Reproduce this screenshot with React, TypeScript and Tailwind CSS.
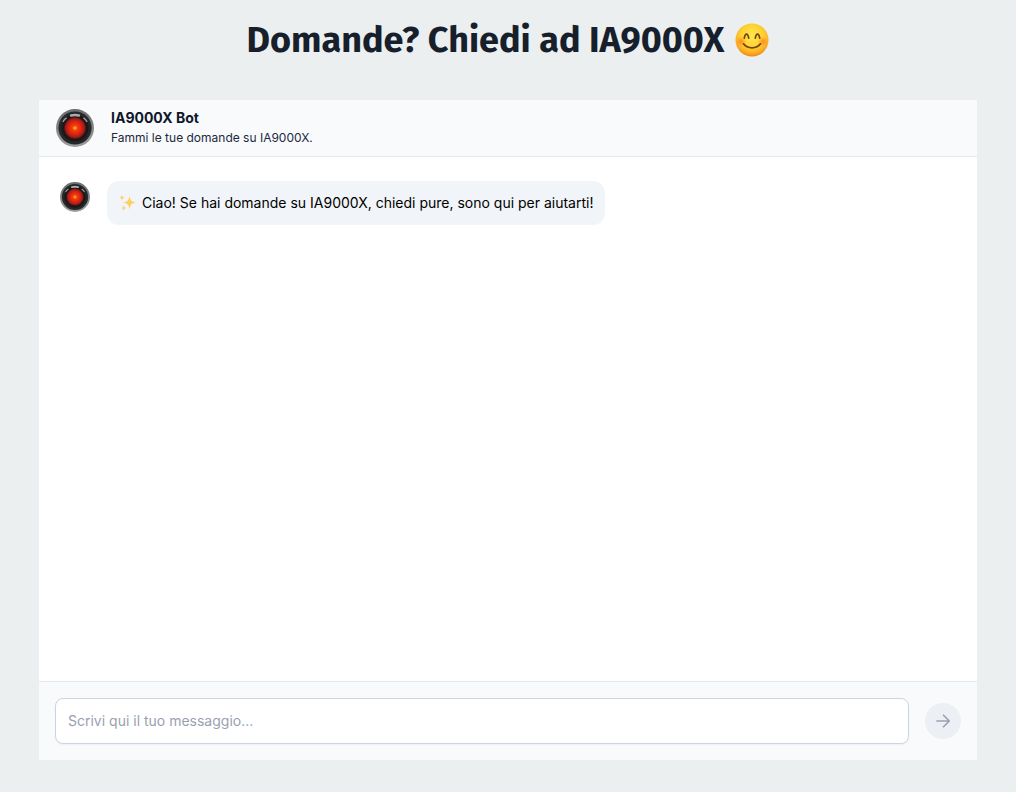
import React, { useState } from 'react';

interface Message {
    id: number;
    text: string;
    sparkles?: boolean;
}

const initialMessages: Message[] = [
    {
        id: 1,
        text: 'Ciao! Se hai domande su IA9000X, chiedi pure, sono qui per aiutarti!',
        sparkles: true
    }
];

const BotAvatar: React.FC<{ id: string; className: string }> = ({ id, className }) => (
    <svg viewBox="0 0 38 38" className={className} aria-hidden="true">
        <defs>
            <radialGradient id={`${id}-eye`}>
                <stop offset="0" stopColor="#ffe02a" />
                <stop offset="0.1" stopColor="#ff8a10" />
                <stop offset="0.24" stopColor="#f4400c" />
                <stop offset="0.6" stopColor="#dc2114" />
                <stop offset="0.85" stopColor="#a31c16" />
                <stop offset="1" stopColor="#3a1716" />
            </radialGradient>
            <linearGradient id={`${id}-ring`} x1="0" y1="0" x2="0" y2="1">
                <stop offset="0" stopColor="#6b6c6d" />
                <stop offset="1" stopColor="#9d9e9f" />
            </linearGradient>
        </defs>
        <circle cx="19" cy="19" r="19" fill={`url(#${id}-ring)`} />
        <circle cx="19" cy="19" r="16.6" fill="#262728" />
        <circle cx="19" cy="19" r="13.5" fill="#1a1818" />
        <circle cx="19" cy="19" r="11" fill={`url(#${id}-eye)`} />
        <g fill="none" strokeLinecap="round">
            <path d="M15 6.5q4-1 8 0" stroke="#a9abad" strokeWidth="2.4" />
            <path d="M7.2 12.4q1.2-2 3-3.2" stroke="#9b9da0" strokeWidth="1.4" />
            <path d="M30.8 12.4q-1.2-2-3-3.2" stroke="#9b9da0" strokeWidth="1.4" />
        </g>
    </svg>
);

const SmileEmoji: React.FC = () => (
    <svg viewBox="0 0 34 34" className="size-[34px] shrink-0" role="img" aria-label="Sorriso">
        <defs>
            <radialGradient id="smile-face" cx="0.5" cy="0.38" r="0.64">
                <stop offset="0" stopColor="#ffe650" />
                <stop offset="0.5" stopColor="#ffd433" />
                <stop offset="0.78" stopColor="#fdb325" />
                <stop offset="1" stopColor="#ec7f12" />
            </radialGradient>
            <radialGradient id="smile-cheek">
                <stop offset="0" stopColor="#fb6a24" stopOpacity="0.7" />
                <stop offset="1" stopColor="#fb8a24" stopOpacity="0" />
            </radialGradient>
        </defs>
        <circle cx="17" cy="17" r="16.5" fill="url(#smile-face)" />
        <circle cx="6" cy="18.5" r="5.5" fill="url(#smile-cheek)" />
        <circle cx="28" cy="18.5" r="5.5" fill="url(#smile-cheek)" />
        <g fill="none" stroke="#74430c" strokeLinecap="round" strokeWidth="1.7">
            <path d="M9.3 15.2c.4-2.6 1.2-4 2.2-4s1.8 1.4 2.2 4" />
            <path d="M20.3 15.2c.4-2.6 1.2-4 2.2-4s1.8 1.4 2.2 4" />
            <path d="M8.5 20.8c4 5.4 13 5.4 17 0" />
        </g>
    </svg>
);

const Sparkles: React.FC = () => (
    <svg viewBox="0 0 18 18" className="size-[18px] shrink-0" aria-hidden="true">
        <path d="M10.5 1.5c.8 5 1.7 6.2 6.7 7-5 .8-5.9 2-6.7 7-.8-5-1.7-6.2-6.7-7 5-.8 5.9-2 6.7-7z" fill="#fdd25a" />
        <path d="M3 .5c.4 2.3.8 2.8 2.8 3.2C3.8 4.1 3.4 4.6 3 6.9 2.6 4.6 2.2 4.1.2 3.7 2.2 3.3 2.6 2.8 3 .5z" fill="#fbcf70" />
        <path d="M4.8 11c.4 2.1.8 2.6 2.7 3-1.9.4-2.3.9-2.7 3-.4-2.1-.8-2.6-2.7-3 1.9-.4 2.3-.9 2.7-3z" fill="#fbcf70" />
    </svg>
);

const App: React.FC = () => {
    const [messages, setMessages] = useState<Message[]>(initialMessages);
    const [draft, setDraft] = useState('');

    const handleSubmit = (e: React.FormEvent) => {
        e.preventDefault();
        const text = draft.trim();
        if (!text) return;
        setMessages([...messages, { id: messages.length + 1, text }]);
        setDraft('');
    };

    return (
        <div className="flex min-h-screen flex-col bg-[#ebeff0] px-[39px] pb-8 font-['Inter',sans-serif] text-slate-900">
            <h1 className="flex items-center justify-center gap-[11px] pt-4 pb-9 font-['Fira_Sans','Noto_Sans',sans-serif] text-4xl leading-[48px] font-bold text-[#171f2c]">
                Domande? Chiedi ad IA9000X
                <SmileEmoji />
            </h1>

            <main className="flex flex-1 flex-col overflow-hidden rounded-xs bg-white">
                <header className="flex items-center gap-4 border-b border-slate-200 bg-slate-50 px-4 py-2">
                    <BotAvatar id="header" className="size-10 shrink-0 p-px" />
                    <div>
                        <h2 className="text-sm leading-5 font-bold">IA9000X Bot</h2>
                        <p className="text-xs leading-5 text-slate-800">Fammi le tue domande su IA9000X.</p>
                    </div>
                </header>

                {/* Messages */}
                <section className="flex flex-1 flex-col gap-4 px-5 py-6">
                    {messages.map((message) => (
                        <div key={message.id} className="flex items-start gap-4">
                            <BotAvatar id={`message-${message.id}`} className="size-8 shrink-0 p-px" />
                            <p className="flex items-center gap-[5px] rounded-xl bg-slate-100 p-3 text-sm leading-5 text-black">
                                {message.sparkles && <Sparkles />}
                                {message.text}
                            </p>
                        </div>
                    ))}
                </section>

                <form onSubmit={handleSubmit} className="flex items-center gap-4 border-t border-slate-200 bg-slate-50 p-4">
                    <input
                        type="text"
                        aria-label="Messaggio"
                        placeholder="Scrivi qui il tuo messaggio..."
                        value={draft}
                        onChange={(e) => setDraft(e.target.value)}
                        className="min-w-0 flex-1 rounded-lg border border-slate-300 bg-white px-3 py-3 text-sm leading-5 shadow-xs outline-none placeholder:text-gray-400 focus:border-slate-400"
                    />
                    <button
                        type="submit"
                        aria-label="Invia"
                        className="flex size-9 shrink-0 items-center justify-center rounded-full bg-[#eceff4] text-gray-400"
                    >
                        <svg
                            viewBox="0 0 20 20"
                            fill="none"
                            stroke="currentColor"
                            strokeWidth="1.6"
                            strokeLinecap="round"
                            strokeLinejoin="round"
                            className="size-5"
                            aria-hidden="true"
                        >
                            <path d="M3.9 10h12.2M10.5 4.2l5.8 5.8-5.8 5.8" />
                        </svg>
                    </button>
                </form>
            </main>
        </div>
    );
};

export default App;
